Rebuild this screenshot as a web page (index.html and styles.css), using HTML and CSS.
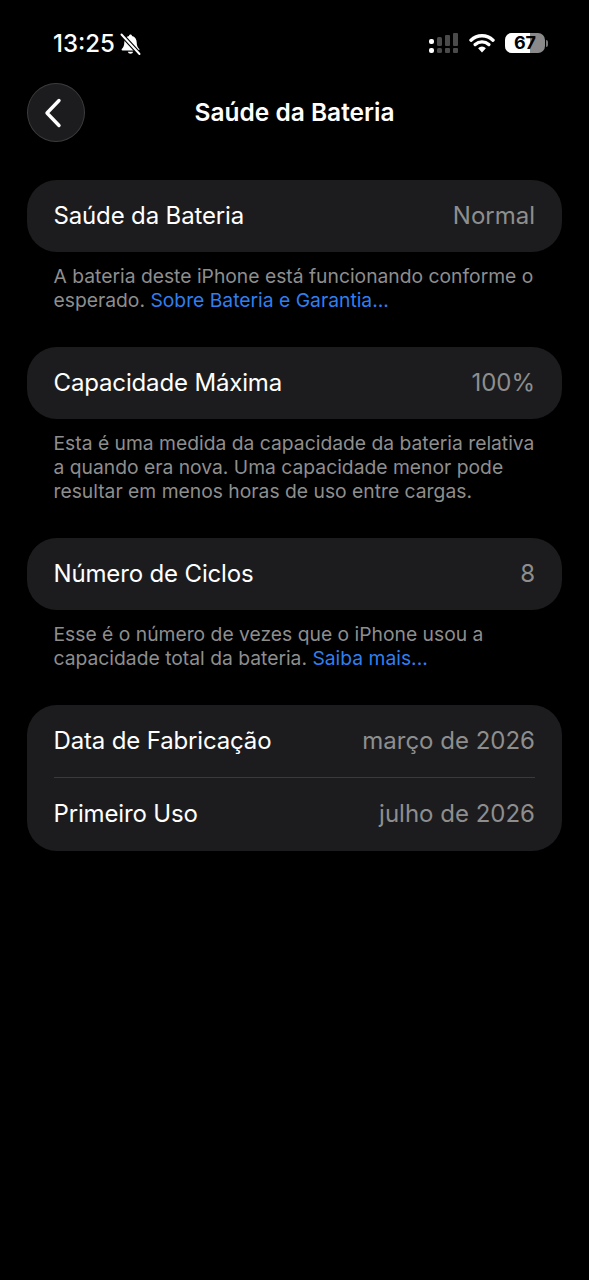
FILE: index.html
```html
<!DOCTYPE html>
<html lang="pt-BR">
<head>
<meta charset="utf-8">
<title>Saúde da Bateria</title>
<link rel="stylesheet" href="styles.css">
</head>
<body>
<div class="status">
  <div class="status-left">
    <span class="time">13:25</span>
    <svg class="bell" viewBox="0 0 21 23" width="21" height="23">
      <path d="M10.500 1.500c-.8 0-1.400.6-1.500 1.400C6 3.600 4.300 6.200 4.300 9.300c0 3.400-.9 5-2.500 6.700-.5.600-.1 1.500.7 1.500h16c.8 0 1.200-.9.7-1.500-1.600-1.700-2.500-3.300-2.500-6.700 0-3.100-1.700-5.700-4.700-6.400-.1-.8-.7-1.400-1.500-1.400z" fill="#fff"/>
      <path d="M7.800 18.800a2.800 2.800 0 0 0 5.400 0z" fill="#fff"/>
      <path d="M1.500 1.500L19.500 21" stroke="#000" stroke-width="4.400"/>
      <path d="M1.500 1.500L19.500 21" stroke="#fff" stroke-width="2" stroke-linecap="round"/>
    </svg>
  </div>
  <div class="status-right">
    <svg class="signal" viewBox="0 0 30 20" width="30" height="20">
      <rect x="0" y="6" width="5" height="5" rx="2" fill="#fff"/>
      <rect x="0" y="15" width="5" height="5" rx="2" fill="#fff"/>
      <rect x="8" y="4" width="5" height="9" rx="1.500" fill="#4a4a4a"/>
      <rect x="8" y="15" width="5" height="5" rx="1.500" fill="#4a4a4a"/>
      <rect x="16" y="2" width="5" height="11" rx="1" fill="#4a4a4a"/>
      <rect x="16" y="15" width="5" height="5" rx="1" fill="#4a4a4a"/>
      <rect x="24" y="0" width="5" height="13" rx="1" fill="#4a4a4a"/>
      <rect x="24" y="15" width="5" height="5" rx="1" fill="#4a4a4a"/>
    </svg>
    <svg class="wifi" viewBox="0 0 26 20" width="26" height="20">
      <path d="M2 7.200A16 16 0 0 1 24 7.200M6.200 11.500A10.200 10.200 0 0 1 19.800 11.500" fill="none" stroke="#fff" stroke-width="3.400" stroke-linecap="round"/>
      <path d="M13 19.500l-3.900-4.300a5.600 5.600 0 0 1 7.800 0z" fill="#fff"/>
    </svg>
    <div class="battery">
      <div class="battery-body">
        <div class="battery-fill"></div>
        <span class="battery-num">67</span>
      </div>
      <div class="battery-cap"></div>
    </div>
  </div>
</div>

<header class="nav">
  <button class="back" aria-label="Voltar">
    <svg viewBox="0 0 20 32" width="20" height="32">
      <path d="M16 3.500L4 16l12 12.500" fill="none" stroke="#fff" stroke-width="3.400" stroke-linecap="round" stroke-linejoin="round"/>
    </svg>
  </button>
  <h1 class="title">Saúde da Bateria</h1>
</header>

<main class="content">
  <section class="group">
    <div class="card">
      <div class="row"><span class="label">Saúde da Bateria</span><span class="value">Normal</span></div>
    </div>
    <p class="note">A bateria deste iPhone está funcionando conforme o esperado. <span class="link">Sobre Bateria e Garantia...</span></p>
  </section>
  <section class="group">
    <div class="card">
      <div class="row"><span class="label">Capacidade Máxima</span><span class="value">100%</span></div>
    </div>
    <p class="note">Esta é uma medida da capacidade da bateria relativa a quando era nova. Uma capacidade menor pode resultar em menos horas de uso entre cargas.</p>
  </section>
  <section class="group">
    <div class="card">
      <div class="row"><span class="label">Número de Ciclos</span><span class="value">8</span></div>
    </div>
    <p class="note">Esse é o número de vezes que o iPhone usou a capacidade total da bateria. <span class="link">Saiba mais...</span></p>
  </section>
  <section class="group">
    <div class="card">
      <div class="row"><span class="label">Data de Fabricação</span><span class="value">março de 2026</span></div>
      <div class="divider"></div>
      <div class="row row-last"><span class="label">Primeiro Uso</span><span class="value">julho de 2026</span></div>
    </div>
  </section>
</main>
</body>
</html>
```
FILE: styles.css
```css
* { box-sizing: border-box; }
html, body { margin: 0; padding: 0; }
body {
  width: 589px;
  height: 1280px;
  overflow: hidden;
  background: #000;
  color: #fff;
  font-family: Inter, "Liberation Sans", sans-serif;
}
.status {
  height: 83px;
  padding: 31px 41px 0 53px;
  display: flex;
  justify-content: space-between;
  align-items: flex-start;
}
.status-left { display: flex; align-items: center; gap: 5px; }
.time { font-size: 24px; line-height: 26px; font-weight: 500; }
.bell { display: block; }
.status-right { display: flex; align-items: center; gap: 10px; margin-top: 2px; }
.signal, .wifi { display: block; }
.battery { display: flex; align-items: center; gap: 1px; }
.battery-body {
  position: relative;
  width: 40px;
  height: 20px;
  border-radius: 7px;
  background: #8a8a8a;
  overflow: hidden;
  display: flex;
  align-items: center;
  justify-content: center;
}
.battery-fill {
  position: absolute;
  left: 0; top: 0; bottom: 0;
  width: 63%;
  background: #fff;
}
.battery-num {
  position: relative;
  color: #000;
  font-size: 18px;
  line-height: 20px;
  font-weight: 700;
}
.battery-cap { width: 2px; height: 7px; border-radius: 0 2px 2px 0; background: #777; }
.nav {
  position: relative;
  height: 59px;
  padding-bottom: 2px;
  display: flex;
  align-items: center;
  justify-content: center;
}
.back {
  position: absolute;
  left: 27px;
  top: 0;
  width: 58px;
  height: 59px;
  border-radius: 50%;
  border: 1px solid #3c3c3e;
  background: #1c1c1e;
  padding: 0 6px 0 0;
  display: flex;
  align-items: center;
  justify-content: center;
}
.back svg { display: block; }
.title { margin: 0; font-size: 24.500px; font-weight: 600; line-height: 30px; }
.content { padding: 38px 27px 0; }
.group { margin-bottom: 35px; }
.card { background: #1c1c1e; border-radius: 30px; }
.row {
  height: 72px;
  padding: 0 27px 2px 26.500px;
  display: flex;
  align-items: center;
  justify-content: space-between;
  font-size: 24px;
}
.row-last { height: 73px; }
.label { color: #fff; letter-spacing: -0.150px; }
.value { color: #8e8e8e; }
.divider { height: 1px; margin: 0 27px 0 26.500px; background: #3a3a3c; }
.note {
  margin: 12px 0 0;
  padding: 0 27px 0 26.500px;
  font-size: 19.300px;
  line-height: 24px;
  color: #8e8e8e;
}
.link { color: #2f7ff0; }
```
